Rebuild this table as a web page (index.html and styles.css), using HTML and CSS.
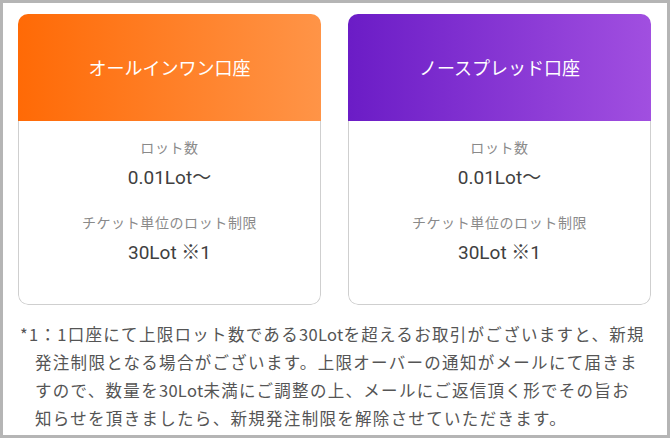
FILE: index.html
```html
<!DOCTYPE html>
<html lang="ja">
<head>
<meta charset="utf-8">
<link rel="stylesheet" href="styles.css">
</head>
<body>
<div class="frame">
  <div class="cards">
    <div class="card">
      <div class="card-head orange">オールインワン口座</div>
      <div class="card-body">
        <div class="label">ロット数</div>
        <div class="value">0.01Lot〜</div>
        <div class="label second">チケット単位のロット制限</div>
        <div class="value">30Lot ※1</div>
      </div>
    </div>
    <div class="card">
      <div class="card-head purple">ノースプレッド口座</div>
      <div class="card-body">
        <div class="label">ロット数</div>
        <div class="value">0.01Lot〜</div>
        <div class="label second">チケット単位のロット制限</div>
        <div class="value">30Lot ※1</div>
      </div>
    </div>
  </div>
  <p class="note">*1：1口座にて上限ロット数である<span class="num">30Lot</span>を超えるお取引がございますと、新規<br>発注制限となる場合がございます。上限オーバーの通知がメールにて届きま<br>すので、数量を<span class="num">30Lot</span>未満にご調整の上、メールにご返信頂く形でその旨お<br>知らせを頂きましたら、新規発注制限を解除させていただきます。</p>
</div>
</body>
</html>
```

FILE: styles.css
```css
* { box-sizing: border-box; }
html, body { margin: 0; padding: 0; background: #fff; }
body {
  width: 670px;
  height: 438px;
  font-family: "Noto Sans CJK JP", "Noto Sans", sans-serif;
}
.frame {
  width: 670px;
  height: 438px;
  border: 3px solid #b5b5b5;
  padding: 11px 16px 0 15px;
  overflow: hidden;
}
.cards {
  display: grid;
  grid-template-columns: 303px 303px;
  column-gap: 27px;
}
.card {
  border-radius: 10px;
  overflow: hidden;
  background: #fff;
}
.card-head {
  height: 107px;
  display: flex;
  align-items: center;
  justify-content: center;
  color: #fff;
  font-size: 18px;
  padding-bottom: 2px;
}
.orange { background: linear-gradient(90deg, #ff6a06 0%, #ff9447 100%); }
.purple { background: linear-gradient(90deg, #6b1cc6 0%, #a14fe0 100%); }
.card-body {
  border: 1px solid #cfcfcf;
  border-top: none;
  border-radius: 0 0 10px 10px;
  height: 184px;
  text-align: center;
  padding-top: 16px;
}
.label {
  color: #8a8a8a;
  font-size: 14px;
  letter-spacing: 0.6px;
  line-height: 20px;
}
.label.second { margin-top: 21px; }
.value {
  color: #404040;
  font-family: Roboto, "Noto Sans CJK JP", sans-serif;
  font-weight: 400;
  font-size: 19px;
  line-height: 26px;
  margin-top: 8px;
}
.note {
  margin: 15px -14px 0 0;
  padding-left: 17px;
  text-indent: -15px;
  color: #555;
  font-size: 16.5px;
  letter-spacing: 1.3px;
  line-height: 28px;
  white-space: nowrap;
}
.num {
  letter-spacing: 0.3px;
}
```
